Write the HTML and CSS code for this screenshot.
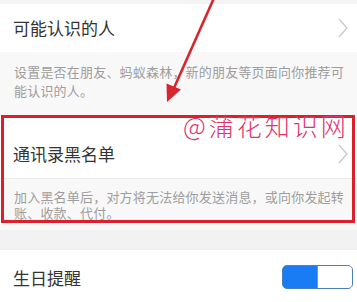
FILE: index.html
```html
<!DOCTYPE html>
<html lang="zh-CN">
<head>
<meta charset="utf-8">
<title>设置</title>
<link rel="stylesheet" href="styles.css">
</head>
<body>
<div class="page">
  <div class="strip"></div>
  <div class="row row-first">
    <span class="title">可能认识的人</span>
    <svg class="chev" width="10" height="20" viewBox="0 0 10 20"><polyline points="1,1 9,10 1,19" fill="none" stroke="#c9c9c9" stroke-width="1.3"/></svg>
  </div>
  <div class="desc desc-first">设置是否在朋友、蚂蚁森林，新的朋友等页面向你推荐可能认识的人。</div>
  <div class="row row-black">
    <span class="title">通讯录黑名单</span>
    <svg class="chev" width="10" height="20" viewBox="0 0 10 20"><polyline points="1,1 9,10 1,19" fill="none" stroke="#c9c9c9" stroke-width="1.3"/></svg>
  </div>
  <div class="desc desc-second">加入黑名单后，对方将无法给你发送消息，或向你发起转账、收款、代付。</div>
  <div class="gap"></div>
  <div class="row row-birthday">
    <span class="title">生日提醒</span>
    <div class="toggle"><div class="knob"></div></div>
  </div>

  <div class="redbox"></div>
  <svg class="arrow" width="357" height="110" viewBox="0 0 357 110">
    <line x1="214" y1="-2" x2="174" y2="88" stroke="#d8262c" stroke-width="2.6"/>
    <polygon points="167,102 181,89.5 166.5,83.5" fill="#d8262c"/>
  </svg>
  <div class="watermark">@蒲花知识网</div>
</div>
</body>
</html>
```

FILE: styles.css
```css
html, body {
  margin: 0;
  padding: 0;
  background: #ffffff;
}
.page {
  position: relative;
  width: 357px;
  height: 302px;
  overflow: hidden;
  font-family: "Noto Sans CJK SC", "Noto Sans", sans-serif;
  background: #ffffff;
}
.strip {
  height: 4px;
  background: #f4f4f4;
}
.row {
  display: flex;
  align-items: center;
  justify-content: space-between;
  padding: 0 9px 0 13px;
  background: #ffffff;
  box-sizing: border-box;
}
.title {
  font-size: 17px;
  color: #333333;
  line-height: 20px;
}
.chev {
  display: block;
}
.row-first {
  height: 48px;
}
.row-black {
  height: 64px;
  padding-top: 15px;
  border-bottom: 1px solid #ececec;
}
.row-birthday {
  height: 56px;
  padding-right: 4px;
}
.desc {
  background: #f8f8f8;
  color: #9d9d9d;
  font-size: 13px;
  letter-spacing: 0.2px;
  line-height: 19px;
  padding: 10px 12px 0 14px;
}
.desc-first {
  height: 53px;
}
.desc-second {
  height: 41px;
  line-height: 16px;
  padding-top: 10px;
}
.gap {
  height: 20px;
  background: #f2f2f2;
}
.toggle {
  width: 71px;
  height: 24px;
  box-sizing: border-box;
  border: 1px solid #4f7fb8;
  border-radius: 5px;
  background: #1a7cf4;
  display: flex;
  justify-content: flex-end;
  margin-top: -2px;
}
.knob {
  width: 35px;
  height: 22px;
  box-sizing: border-box;
  background: #ffffff;
  border-left: 1px solid #7f93a8;
  border-radius: 0 4px 4px 0;
}
.redbox {
  position: absolute;
  left: 1px;
  top: 115px;
  width: 354px;
  height: 108px;
  box-sizing: border-box;
  border: 3px solid #dc1f2b;
}
.arrow {
  position: absolute;
  left: 0;
  top: 0;
}
.watermark {
  position: absolute;
  left: 183px;
  top: 110px;
  font-size: 25px;
  line-height: 30px;
  letter-spacing: 3px;
  color: #e0346a;
  font-weight: 300;
}
```
